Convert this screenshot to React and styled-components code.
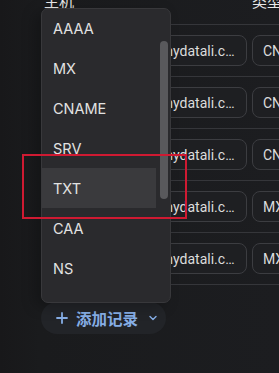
import React from 'react';
import styled, { createGlobalStyle } from 'styled-components';

const GlobalStyle = createGlobalStyle`
  html, body {
    margin: 0;
    padding: 0;
    background: #1b1c1f;
    overflow: hidden;
  }
  body {
    font-family: Inter, Roboto, "Noto Sans CJK SC", sans-serif;
    color: #e3e3e3;
  }
`;

const Page = styled.div`
  position: relative;
  width: 279px;
  height: 373px;
  overflow: hidden;
  background: linear-gradient(90deg, #18181a 0px, #1a1b1d 40px, #1c1d20 100%);
`;

const Table = styled.div`
  margin-left: 44px;
  width: 300px;
`;

const HeaderRow = styled.div`
  display: flex;
  height: 24px;
  border-bottom: 1px solid #35363a;
`;

const HeaderCell = styled.div`
  width: ${(p) => p.width}px;
  margin-top: -8px;
  font-family: "Noto Sans CJK SC", sans-serif;
  font-size: 15px;
  line-height: 18px;
  color: #e8e8e8;
`;

const Row = styled.div`
  display: flex;
  gap: 5px;
  height: 52px;
  padding-top: 10px;
  box-sizing: border-box;
  border-bottom: 1px solid #35363a;
`;

const Field = styled.div`
  width: ${(p) => p.width}px;
  height: 31px;
  box-sizing: border-box;
  border: 1px solid #3c3d41;
  border-radius: 8px;
  background: #1e1f22;
  padding: 0 9px 0 10px;
  display: flex;
  align-items: center;
  font-family: Roboto, sans-serif;
  font-size: 14px;
  color: #dcdcdc;
  overflow: hidden;
`;

const FieldText = styled.span`
  white-space: nowrap;
  overflow: hidden;
  text-overflow: ellipsis;
`;

const AddButton = styled.button`
  margin: 17px 0 0 41px;
  height: 32px;
  width: 125px;
  border: none;
  border-radius: 16px;
  background: #222428;
  color: #86aee6;
  display: flex;
  align-items: center;
  padding: 0 0 0 15px;
  gap: 8px;
  font-family: "Noto Sans CJK SC", sans-serif;
  font-size: 15.5px;
  font-weight: 700;
  cursor: pointer;
`;

const Menu = styled.div`
  position: absolute;
  left: 41px;
  top: 8px;
  width: 130px;
  height: 295px;
  box-sizing: border-box;
  background: #2a2a2d;
  border: 1px solid #38383b;
  border-radius: 7px;
  overflow: hidden;
  box-shadow: -6px 4px 14px rgba(0, 0, 0, 0.25);
`;

const MenuList = styled.div`
  display: flex;
  flex-direction: column;
  width: 115px;
  margin-left: -1px;
  margin-top: -1px;
`;

const MenuItem = styled.div`
  height: 40px;
  display: flex;
  align-items: center;
  padding-left: 12px;
  font-size: 14.5px;
  color: #e2e2e2;
  background: ${(p) => (p.active ? '#3a3a3d' : 'transparent')};
`;

const Thumb = styled.div`
  position: absolute;
  left: 118px;
  top: 32px;
  width: 8px;
  height: 158px;
  border-radius: 4px;
  background: #59595c;
`;

const Highlight = styled.div`
  position: absolute;
  left: 22px;
  top: 154px;
  width: 165px;
  height: 65px;
  box-sizing: border-box;
  border: 2px solid #cf1a32;
  pointer-events: none;
`;

const rows = ['CNAME', 'CNAME', 'CNAME', 'MX', 'MX'];
const items = ['AAAA', 'MX', 'CNAME', 'SRV', 'TXT', 'CAA', 'NS', 'PTR'];

function Plus() {
  return (
    <svg width="12" height="12" viewBox="0 0 12 12">
      <path d="M6 1v10M1 6h10" stroke="currentColor" strokeWidth="1.8" strokeLinecap="round" />
    </svg>
  );
}

function Chevron() {
  return (
    <svg width="10" height="10" viewBox="0 0 10 10" style={{ marginLeft: 2 }}>
      <path d="M2 3.5l3 3 3-3" stroke="currentColor" strokeWidth="1.4" fill="none" strokeLinecap="round" strokeLinejoin="round" />
    </svg>
  );
}

export default function App() {
  return (
    <Page>
      <GlobalStyle />
      <Table>
        <HeaderRow>
          <HeaderCell width={208}>主机</HeaderCell>
          <HeaderCell width={80}>类型</HeaderCell>
        </HeaderRow>
        {rows.map((t, i) => (
          <Row key={i}>
            <Field width={203}>
              <FieldText>mail.example.cn.mydatali.com</FieldText>
            </Field>
            <Field width={80}>
              <FieldText>{t}</FieldText>
            </Field>
          </Row>
        ))}
      </Table>
      <AddButton>
        <Plus />
        添加记录
        <Chevron />
      </AddButton>
      <Menu>
        <MenuList>
          {items.map((it) => (
            <MenuItem key={it} active={it === 'TXT'}>{it}</MenuItem>
          ))}
        </MenuList>
        <Thumb />
      </Menu>
      <Highlight />
    </Page>
  );
}
